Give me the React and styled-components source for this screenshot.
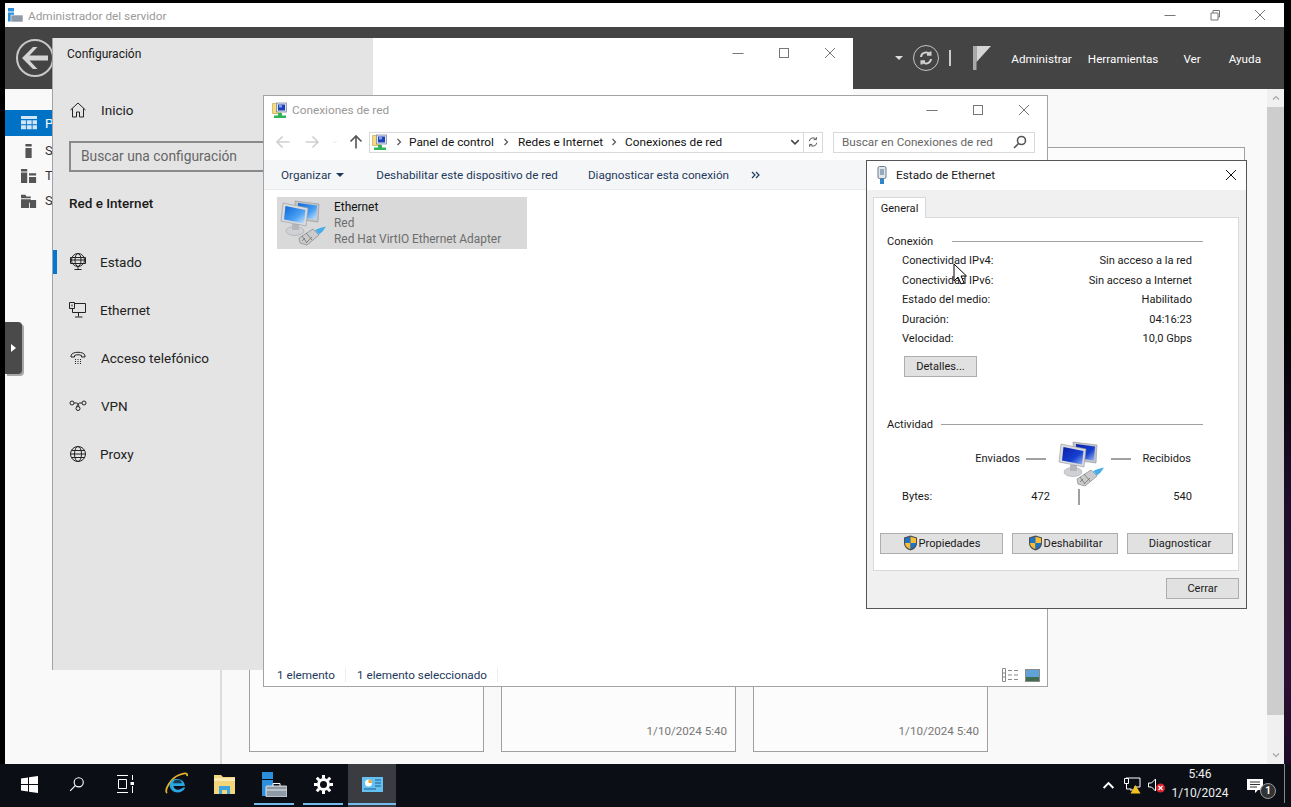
import React from "react";
import styled, { createGlobalStyle } from "styled-components";

const GlobalStyle = createGlobalStyle`
  html, body { margin: 0; padding: 0; background: #000; }
  body { font-family: Roboto, "Noto Sans", sans-serif; font-size: 12px; color: #1a1a1a; }
  * { box-sizing: border-box; }
`;

/* ---------- icons ---------- */

const Caption = ({ kind, color = "#777" }) => (
  <svg width="12" height="12" viewBox="0 0 12 12" fill="none" stroke={color} strokeWidth="1">
    {kind === "min" && <path d="M0.5 6.5h11" />}
    {kind === "max" && <rect x="1.5" y="1.5" width="9" height="9" />}
    {kind === "restore" && <path d="M2 4h7v7H2zM4 4V1.5h6.5V8H9" />}
    {kind === "close" && <path d="M1 1l10 10M11 1L1 11" />}
  </svg>
);

const NetworkFolder = () => (
  <svg width="17" height="17" viewBox="0 0 17 17">
    <path d="M0.5 1.5h4l1 1h3v9h-8z" fill="#f4dc82" stroke="#c9a94a" strokeWidth="0.7" />
    <rect x="4.5" y="1" width="10" height="9" fill="#dfe4ee" stroke="#7c8aa8" strokeWidth="0.8" />
    <rect x="6" y="2.5" width="7" height="6" fill="#1f3fb5" />
    <rect x="7" y="3" width="3" height="2.5" fill="#7da0f0" />
    <path d="M6 11h4v2.500h4V16H2v-2.500h4z" fill="#2fb457" />
  </svg>
);

const Computers = ({ washed }) => (
  <svg width="48" height="48" viewBox="0 0 48 48">
    <defs>
      <linearGradient id={washed ? "scrA" : "scrB"} x1="0" y1="0" x2="1" y2="1">
        <stop offset="0" stopColor={washed ? "#0d66d8" : "#0a1fa8"} />
        <stop offset="0.6" stopColor={washed ? "#4aa0f2" : "#1540d0"} />
        <stop offset="1" stopColor={washed ? "#cfe6fb" : "#9db8f0"} />
      </linearGradient>
    </defs>
    <path d="M15 2l24 3-1 18-22-3z" fill="#c3c5c9" stroke="#8f9298" strokeWidth="0.6" />
    <path d="M18 4l19 2.500-1 14-18-2.500z" fill={`url(#${washed ? "scrA" : "scrB"})`} />
    <ellipse cx="15" cy="32" rx="9" ry="4.500" fill="#cfd1d4" stroke="#a4a6aa" strokeWidth="0.6" />
    <rect x="12" y="25" width="7" height="6" fill="#b4b6ba" />
    <path d="M3 4l25 5-2 18L1 22z" fill="#d8dadd" stroke="#94979d" strokeWidth="0.6" />
    <path d="M5.500 7l20 4-1.500 13.500-20-4z" fill={`url(#${washed ? "scrA" : "scrB"})`} />
    <path d="M19 39l14-9 6 6-12 10-7-2z" fill="#c9cbce" stroke="#83868b" strokeWidth="0.7" />
    <path d="M22 42l3-3M26 44l3-3M29 41l3-3M22 37l5 7M26 34l6 7" stroke="#77755c" strokeWidth="0.8" />
    <path d="M35 31l5-2 6-1.500-3.500 5-3.500 3z" fill="#45aee8" />
  </svg>
);

const Shield = () => (
  <svg width="15" height="16" viewBox="0 0 15 16">
    <path d="M7.500 0.500l6.500 2v5.500c0 4-3 6.500-6.500 7.500C4 14.500 1 12 1 8V2.500z" fill="#4d4d4d" />
    <path d="M7.500 1.700V8H2V3.300z" fill="#1e73c4" />
    <path d="M7.500 1.700V8H13V3.300z" fill="#f5bd3a" />
    <path d="M2 8h5.500v6.200C4.500 13.400 2.200 11.300 2 8z" fill="#f5bd3a" />
    <path d="M13 8H7.500v6.200c3-.8 5.300-2.900 5.500-6.200z" fill="#1e73c4" />
  </svg>
);

const NavGlyph = ({ kind }) => (
  <svg width="18" height="18" viewBox="0 0 18 18" fill="none" stroke="#222" strokeWidth="1">
    {kind === "home" && <path d="M1.500 9L9 2l7.500 7M3.500 7.500V16h4v-5h3v5h4V7.500" />}
    {kind === "status" && (
      <>
        <circle cx="9" cy="7" r="6.500" />
        <ellipse cx="9" cy="7" rx="3" ry="6.500" />
        <path d="M2.500 7h13M1.500 4.500h15v6h-15zM9 13.500V16M5.500 16.500h7" />
      </>
    )}
    {kind === "ethernet" && (
      <path d="M6 2.500h10.500v9h-13V8M9.500 11.500v4M6 16h7.500M0.500 1.500h5v6h-5zM3 3.500v2" />
    )}
    {kind === "dial" && (
      <>
        <path d="M2 7c0-5 14-5 14 0v1h-3.500V6.500c-2-1-5-1-7 0V8H2z" />
        <path d="M6 10.500h1M8.500 10.500h1M11 10.500h1M6 12.500h1M8.500 12.500h1M11 12.500h1M6 14.500h1M8.500 14.500h1M11 14.500h1" />
      </>
    )}
    {kind === "vpn" && (
      <>
        <circle cx="3" cy="6" r="2" />
        <circle cx="15" cy="6" r="2" />
        <circle cx="9" cy="11.500" r="2" />
        <path d="M5 6h2.500c1.500 0 2 1.500 2.500 3.500M13 6h-2.500c-1 0-1.500 1.500-3 3.700" />
      </>
    )}
    {kind === "globe" && (
      <>
        <circle cx="9" cy="9" r="7.500" />
        <ellipse cx="9" cy="9" rx="3.500" ry="7.500" />
        <path d="M1.500 9h15M2.500 5.500h13M2.500 12.500h13" />
      </>
    )}
  </svg>
);

const SideGlyph = ({ kind, color }) => (
  <svg width="16" height="16" viewBox="0 0 18 16" fill={color}>
    {kind === "dash" && (
      <path d="M0 0h18v3.500H0zM0 5h5.500v4.500H0zM6.500 5H12v4.500H6.500zM13 5h5v4.500h-5zM0 10.500h5.500V15H0zM6.500 10.500H12V15H6.500zM13 10.500h5V15h-5z" />
    )}
    {kind === "local" && <path d="M5 0h7v3H5zM5 4.500h7V16H5z" />}
    {kind === "all" && <path d="M0 0h7v3H0zM0 4h7v12H0zM9 5h8v2.500H9zM9 9h8v7H9z" />}
    {kind === "files" && <path d="M0 1h5l1 2h5v2H0zM0 6h11v4H9v6H0zM10 7h7v9h-7z" />}
  </svg>
);

const Arrow = ({ dir, color }) => (
  <svg
    width="16"
    height="14"
    viewBox="0 0 16 14"
    fill="none"
    stroke={color}
    strokeWidth="1.600"
    style={{ transform: dir === "right" ? "scaleX(-1)" : dir === "up" ? "rotate(90deg)" : "none" }}
  >
    <path d="M14.500 7H2M7.500 1.500L2 7l5.500 5.500" />
  </svg>
);

const BackArrow = () => (
  <svg width="28" height="24" viewBox="0 0 28 24" fill="#d4d4d4">
    <path d="M12 1h4.500L8.500 9.500H27v5H8.500L16.500 23H12L1 12z" />
  </svg>
);

const Chevron = ({ size = 8, color = "#666", rotate = 0 }) => (
  <svg width={size} height={size} viewBox="0 0 8 8" fill="none" stroke={color} strokeWidth="1.200" style={{ transform: `rotate(${rotate}deg)` }}>
    <path d="M2.500 1l3 3-3 3" />
  </svg>
);

const DoubleChevron = () => (
  <svg width="9" height="8" viewBox="0 0 9 8" fill="none" stroke="#1e395b" strokeWidth="1.200">
    <path d="M1 1l3 3-3 3M5 1l3 3-3 3" />
  </svg>
);

const SearchGlass = ({ color = "#555", size = 14, width = 1.600 }) => (
  <svg width={size} height={size} viewBox="0 0 14 14" fill="none" stroke={color} strokeWidth={width}>
    <circle cx="8.500" cy="5.500" r="4" />
    <path d="M5.500 8.500L1 13" />
  </svg>
);

const Refresh = ({ size, color, width }) => (
  <svg width={size} height={size} viewBox="0 0 16 16" fill="none" stroke={color} strokeWidth={width}>
    <path d="M3 7a5 5 0 0 1 9-2.500M13 9a5 5 0 0 1-9 2.500M12.500 1.500v3.300H9M3.500 14.500v-3.300H7" />
  </svg>
);

const Pointer = () => (
  <svg width="14" height="22" viewBox="0 0 14 22">
    <path d="M1 1v17l4-4 3 7 3-1.300-3-6.700h5.500z" fill="#fff" stroke="#000" strokeWidth="1" />
  </svg>
);

/* ---------- desktop + server manager ---------- */

const Desktop = styled.div`
  position: relative;
  width: 1291px;
  height: 807px;
  overflow: hidden;
  display: flex;
  flex-direction: column;
  background: linear-gradient(180deg, #000 0%, #000 40%, #1d0f2b 62%, #2a1033 85%, #120a1f 100%);
`;

const ManagerSlot = styled.div`
  flex: 1;
  min-height: 0;
  padding: 3px 7px 0 5px;
  background: linear-gradient(90deg, #000 0 5px, transparent 5px);
`;

const Manager = styled.div`
  height: 100%;
  display: flex;
  flex-direction: column;
  background: #f9f9f9;
`;

const TitleBar = styled.div`
  height: ${(p) => p.$h}px;
  flex: none;
  display: flex;
  align-items: center;
  background: #fff;
  padding-left: ${(p) => p.$pad}px;
  padding-bottom: ${(p) => p.$bottom || 0}px;
  gap: ${(p) => p.$gap || 6}px;
`;

const TitleText = styled.span`
  font-size: 11.800px;
  color: ${(p) => p.$color || "#999"};
  flex: 1;
  padding-top: ${(p) => p.$top || 0}px;
`;

const CaptionRow = styled.div`
  display: flex;
  align-items: center;
  margin-right: ${(p) => p.$right}px;
  gap: ${(p) => p.$gap}px;
`;

const ManagerHeader = styled.div`
  height: 62px;
  flex: none;
  display: flex;
  align-items: center;
  background: #444;
  padding-left: 11px;
  color: #fff;
`;

const BackCircle = styled.div`
  width: 38px;
  height: 38px;
  border-radius: 50%;
  border: 2px solid #c8c8c8;
  display: flex;
  align-items: center;
  justify-content: center;
`;

const HeaderRight = styled.div`
  margin-left: auto;
  display: flex;
  align-items: center;
`;

const DropCaret = styled.i`
  width: 0;
  height: 0;
  border-left: 4px solid transparent;
  border-right: 4px solid transparent;
  border-top: 4px solid ${(p) => p.$color || "#ddd"};
  display: block;
`;

const RefreshCircle = styled.div`
  width: 26px;
  height: 26px;
  margin-left: 10px;
  border: 1.500px solid #c4c4c4;
  border-radius: 50%;
  display: flex;
  align-items: center;
  justify-content: center;
`;

const HeaderSep = styled.div`
  width: 2px;
  height: 16px;
  background: #ccc;
  margin: 0 22px 0 10px;
`;

const HeaderMenu = styled.div`
  display: flex;
  margin-left: 20px;
  margin-right: 23px;
  padding-top: 2px;
  font-size: 11.700px;
  color: #fff;
`;

const HeaderMenuItem = styled.span`
  margin-left: ${(p) => p.$left || 0}px;
`;

const ManagerBody = styled.div`
  flex: 1;
  min-height: 0;
  display: flex;
`;

const Sidebar = styled.div`
  width: 217px;
  flex: none;
  padding-top: 21px;
  border-right: 2px solid #dcdcdc;
  overflow: hidden;
`;

const SideItem = styled.div`
  height: 25px;
  display: flex;
  align-items: center;
  padding-left: 16px;
  gap: 8px;
  white-space: nowrap;
  font-size: 13px;
  color: #333;
`;

const ActiveSideItem = styled(SideItem)`
  height: 26px;
  margin-bottom: 2px;
  background: #0072c6;
  color: #fff;
`;

const MainArea = styled.div`
  flex: 1;
  min-width: 0;
  padding: 58px 22px 0 27px;
  position: relative;
`;

const WelcomePanel = styled.div`
  height: 330px;
  border: 1px solid #a0a0a0;
  background: #fcfcfc;
  margin-bottom: 23px;
`;

const CardRow = styled.div`
  display: grid;
  grid-template-columns: repeat(3, 235px);
  gap: 17px;
`;

const Card = styled.div`
  height: 252px;
  border: 1px solid #a0a0a0;
  background: #fcfcfc;
  display: flex;
  align-items: flex-end;
  justify-content: flex-end;
  padding: 0 8px 13px 0;
  font-size: 11.600px;
  color: #777;
`;

const Scrollbar = styled.div`
  width: 17px;
  flex: none;
  background: #f0f0f0;
  display: flex;
  flex-direction: column;
  align-items: center;
`;

const ScrollEnd = styled.div`
  height: 18px;
  flex: none;
  display: flex;
  align-items: center;
  justify-content: center;
`;

const ScrollThumb = styled.div`
  flex: 1;
  width: 100%;
  background: #cdcdcd;
  margin-bottom: 31px;
`;

const DockTab = styled.div`
  position: absolute;
  left: 5px;
  top: 322px;
  width: 17px;
  height: 52px;
  background: #4a4a4a;
  border-radius: 0 4px 4px 0;
  box-shadow: 2px 2px 0 0 #a8a8a8;
  display: flex;
  align-items: center;
  justify-content: center;
`;

const TinyPlay = styled.i`
  display: block;
  width: 0;
  height: 0;
  border-top: 4px solid transparent;
  border-bottom: 4px solid transparent;
  border-left: 5px solid #fff;
`;

/* ---------- floating windows ---------- */

const FloatingWindow = styled.div`
  position: absolute;
  left: ${(p) => p.$x}px;
  top: ${(p) => p.$y}px;
  width: ${(p) => p.$w}px;
  height: ${(p) => p.$h}px;
  border: 1px solid ${(p) => p.$border || "#a3a3a3"};
  background: #fff;
  display: flex;
  flex-direction: column;
`;

/* settings */

const SettingsPane = styled.div`
  width: 320px;
  height: 100%;
  background: #e4e4e4;
  display: flex;
  flex-direction: column;
`;

const SettingsShell = styled(FloatingWindow)`
  flex-direction: row;
  border-top: none;
  border-right: none;
  border-bottom: none;
`;

const SettingsTitle = styled.div`
  padding: 9px 0 0 14px;
  height: 58px;
  font-size: 12px;
  color: #1a1a1a;
`;

const SettingsRow = styled.div`
  height: 48px;
  display: flex;
  align-items: center;
  padding-left: 16px;
  font-size: 13.500px;
  color: #222;
  position: relative;
  gap: ${(p) => p.$gap || 13}px;
`;

const HomeRow = styled(SettingsRow)`
  height: 28px;
  margin-bottom: 17px;
`;

const ActiveMark = styled.div`
  position: absolute;
  left: 0;
  top: 12px;
  width: 4px;
  height: 24px;
  background: #0078d7;
`;

const SettingsSearch = styled.div`
  margin-left: 16px;
  width: 300px;
  height: 31px;
  border: 2px solid #8a8a8a;
  display: flex;
  align-items: center;
  padding: 0 0 1px 10px;
  font-size: 13.800px;
  color: #666;
`;

const GroupTitle = styled.div`
  margin: 23px 0 27px 16px;
  font-size: 13.500px;
  font-weight: 500;
  color: #1a1a1a;
`;

const SettingsRight = styled.div`
  flex: 1;
  display: flex;
  justify-content: flex-end;
`;

const SettingsCaption = styled(CaptionRow)`
  align-self: flex-start;
  margin-top: 9px;
`;

/* connections */

const AddressRow = styled.div`
  height: 36px;
  flex: none;
  display: flex;
  align-items: center;
  padding-left: 11px;
`;

const NavButton = styled.div`
  width: ${(p) => p.$w}px;
  flex: none;
  display: flex;
  justify-content: ${(p) => (p.$inset ? "flex-start" : "center")};
  padding-left: ${(p) => p.$inset || 0}px;
`;

const AddressBox = styled.div`
  width: 454px;
  height: 21px;
  border: 1px solid #d9d9d9;
  display: flex;
  align-items: center;
  padding-left: 2px;
  font-size: 11.800px;
  color: #111;
`;

const Crumb = styled.span`
  margin: 0 ${(p) => p.$space}px;
  line-height: 0;
`;

const AddressTail = styled.div`
  margin-left: auto;
  display: flex;
  align-items: center;
  height: 100%;
`;

const RefreshBox = styled.div`
  width: 19px;
  height: 100%;
  margin-left: 3px;
  border-left: 1px solid #d9d9d9;
  display: flex;
  align-items: center;
  justify-content: center;
`;

const SearchBox = styled.div`
  width: 202px;
  height: 21px;
  margin-left: 10px;
  border: 1px solid #d9d9d9;
  display: flex;
  align-items: center;
  justify-content: space-between;
  padding: 0 7px 0 8px;
  font-size: 11.700px;
  color: #666;
`;

const CommandBar = styled.div`
  height: 30px;
  flex: none;
  display: flex;
  align-items: center;
  padding-left: 17px;
  background: #f5f6f7;
  border-bottom: 1px solid #e8e9eb;
  font-size: 11.700px;
  color: #1e395b;
`;

const Command = styled.span`
  margin-right: ${(p) => p.$right}px;
  display: flex;
  align-items: center;
  gap: 5px;
`;

const ConnectionList = styled.div`
  flex: 1;
  padding: 7px 13px;
`;

const ConnectionItem = styled.div`
  width: 250px;
  height: 52px;
  background: #d9d9d9;
  display: flex;
  align-items: center;
  gap: 6px;
  padding-left: 3px;
  line-height: 16px;
  font-size: 11.900px;
`;

const ConnectionText = styled.div`
  color: #6d6d6d;
  white-space: nowrap;
`;

const ConnectionName = styled.div`
  color: #111;
`;

const StatusBar = styled.div`
  height: 22px;
  flex: none;
  display: flex;
  align-items: center;
  padding-left: 13px;
  font-size: 11.700px;
  color: #1e395b;
`;

const StatusCell = styled.span`
  padding-right: 10px;
  margin-right: 11px;
  border-right: 1px solid #eee;
`;

const ViewIcons = styled.div`
  margin-left: auto;
  margin-right: 7px;
  display: flex;
  align-items: center;
  gap: 6px;
`;

/* ethernet status */

const DialogBody = styled.div`
  flex: 1;
  background: #f0f0f0;
  padding: 7px 7px 0 6px;
  display: flex;
  flex-direction: column;
`;

const Tab = styled.div`
  width: 53px;
  height: 21px;
  background: #fff;
  border: 1px solid #d9d9d9;
  border-bottom: none;
  display: flex;
  align-items: center;
  justify-content: center;
  font-size: 11.100px;
  position: relative;
  z-index: 1;
  margin-bottom: -1px;
`;

const TabPanel = styled.div`
  height: 354px;
  background: #fff;
  border: 1px solid #d9d9d9;
  padding: 13px 6px 0 6px;
  font-size: 11.100px;
  color: #1a1a1a;
`;

const SectionHead = styled.div`
  height: 20px;
  display: flex;
  align-items: center;
  padding-left: 7px;
  margin-top: ${(p) => p.$top || 0}px;
  margin-right: 29px;
  gap: ${(p) => p.$gap}px;
`;

const SectionRule = styled.div`
  flex: 1;
  height: 1px;
  background: #a0a0a0;
`;

const InfoRow = styled.div`
  height: 19.500px;
  display: flex;
  align-items: center;
  justify-content: space-between;
  padding-left: 22px;
  margin-right: 40px;
`;

const DlgButton = styled.div`
  height: 21px;
  width: ${(p) => p.$w}px;
  background: #e1e1e1;
  border: 1px solid #adadad;
  display: flex;
  align-items: center;
  justify-content: center;
  gap: 1px;
  font-size: 11.100px;
  color: #1a1a1a;
`;

const DetailsButton = styled(DlgButton)`
  margin: 7px 0 0 24px;
`;

const ActivityGrid = styled.div`
  display: grid;
  grid-template-columns: 148px 58px 84px;
  margin: 5px 0 0 22px;
`;

const ActivityCell = styled.div`
  display: flex;
  align-items: center;
  justify-content: ${(p) => p.$justify || "flex-end"};
  gap: 6px;
  height: ${(p) => p.$h}px;
  padding-right: ${(p) => p.$right || 0}px;
  padding-left: ${(p) => p.$left || 0}px;
`;

const Dash = styled.div`
  width: 20px;
  height: 2px;
  background: #a0a0a0;
`;

const ActivityBar = styled.div`
  width: 2px;
  height: 16px;
  background: #a0a0a0;
`;

const ButtonRow = styled.div`
  display: grid;
  grid-template-columns: 123px 106px 106px;
  column-gap: 9px;
  margin-top: 27px;
`;

const DialogFoot = styled.div`
  display: flex;
  justify-content: flex-end;
  margin-top: 7px;
`;

const MousePointer = styled.div`
  position: absolute;
  left: 953px;
  top: 263px;
  line-height: 0;
`;

/* ---------- taskbar ---------- */

const Taskbar = styled.div`
  height: 43px;
  flex: none;
  display: flex;
  align-items: stretch;
  background: #0b0e15;
  color: #fff;
  position: relative;
`;

const TaskSlot = styled.div`
  width: ${(p) => p.$w || 48}px;
  margin-left: ${(p) => p.$left || 0}px;
  flex: none;
  display: flex;
  align-items: center;
  justify-content: center;
  padding-bottom: 3px;
  position: relative;
  background: ${(p) => (p.$active ? "#3a3c41" : "transparent")};
`;

const RunningLine = styled.div`
  position: absolute;
  bottom: 2px;
  left: ${(p) => (p.$active ? 0 : 4)}px;
  right: ${(p) => (p.$active ? 0 : 4)}px;
  height: 2px;
  background: #76b9ed;
`;

const Tray = styled.div`
  margin-left: auto;
  display: flex;
  align-items: center;
  padding-right: 11px;
`;

const TrayIcon = styled.div`
  width: 24px;
  display: flex;
  justify-content: center;
  line-height: 0;
`;

const Clock = styled.div`
  width: 64px;
  margin: 0 15px 3px 0;
  text-align: center;
  font-size: 12px;
  line-height: 19px;
  color: #eee;
`;

const Notify = styled.div`
  position: relative;
  width: 26px;
  line-height: 0;
`;

const NotifyBadge = styled.div`
  position: absolute;
  right: -3px;
  bottom: -6px;
  width: 16px;
  height: 16px;
  border-radius: 50%;
  border: 1px solid #999;
  background: #333;
  color: #fff;
  font-size: 10px;
  font-weight: 700;
  line-height: 14px;
  text-align: center;
`;

const ShowDesktop = styled.div`
  width: 1px;
  margin: 0 6px 4px 0;
  background: #888;
`;

const WindowsLogo = () => (
  <svg width="17" height="17" viewBox="0 0 17 17" fill="#fff">
    <path d="M0 2.500l7-1V8H0zM8 1.300L17 0v8H8zM0 9h7v6.500l-7-1zM8 9h9v8l-9-1.300z" />
  </svg>
);

const TaskView = () => (
  <svg width="17" height="18" viewBox="0 0 17 18" fill="none" stroke="#fff" strokeWidth="1">
    <path d="M0 .5h11M0 17.500h11M1.500 4.500h8v9h-8zM15.500 0v5M15.500 11v7" />
    <rect x="13.500" y="7" width="3.500" height="3" fill="#fff" stroke="none" />
  </svg>
);

const IeLogo = () => (
  <svg width="24" height="24" viewBox="0 0 24 24" fill="none">
    <path d="M2 21C-1 18 6 6 14 3c4-1.500 9-3 8 1" stroke="#e5b32a" strokeWidth="1.800" />
    <path d="M4.500 12.500a8 8 0 0 1 15.500 1.500H8.500c.5 4 6 5 9.500 1.500h2.300C17 23 5 22 4.500 12.500z" fill="#2aa6e0" />
    <path d="M8 11.200c1-4.500 8-4.500 9 0H8z" fill="#0b0e15" opacity="0.7" />
  </svg>
);

const ExplorerIcon = () => (
  <svg width="22" height="19" viewBox="0 0 22 19">
    <path d="M0 0h7l2 2h12v17H0z" fill="#f3d57c" />
    <rect x="0" y="3" width="21" height="3" fill="#fbeab0" />
    <path d="M5 11h11v8h-3v-4H8v4H5z" fill="#3da6df" />
  </svg>
);

const ManagerIcon = () => (
  <svg width="25" height="25" viewBox="0 0 25 25">
    <rect x="0" y="0" width="11" height="7" fill="#2b8fdc" />
    <rect x="0" y="8" width="11" height="16" fill="#2b8fdc" />
    <rect x="4" y="14" width="21" height="11" rx="1" fill="#8d9aa5" stroke="#fff" strokeWidth="0.8" />
    <path d="M11 14v-2.500h7V14" fill="none" stroke="#fff" strokeWidth="1" />
    <path d="M4.500 18h20" stroke="#fff" strokeWidth="0.8" />
  </svg>
);

const GearIcon = () => (
  <svg width="19" height="19" viewBox="0 0 19 19" fill="none" stroke="#fff">
    <circle cx="9.500" cy="9.500" r="5" strokeWidth="3" />
    <path d="M9.500 0v3.500M9.500 15.500V19M0 9.500h3.500M15.500 9.500H19M2.800 2.800l2.400 2.400M13.800 13.800l2.400 2.400M2.800 16.200l2.400-2.400M13.800 5.200l2.400-2.400" strokeWidth="3" />
  </svg>
);

const PanelIcon = () => (
  <svg width="21" height="15" viewBox="0 0 21 15">
    <rect width="21" height="15" fill="#63c0f0" />
    <circle cx="6.500" cy="6" r="3.500" fill="#fff" />
    <path d="M6.500 6V2.500A3.500 3.500 0 0 1 10 6z" fill="#f1a52b" />
    <path d="M13 3h6M13 6h6M13 9h6M2 12h12" stroke="#1c5c92" strokeWidth="1.200" />
  </svg>
);

const TrayNetwork = () => (
  <svg width="17" height="17" viewBox="0 0 17 17" fill="none" stroke="#fff">
    <path d="M2 1h14v9h-6M9 13h-3M0.500 1.500h4v5h-4zM2.500 6.500V12h5" />
    <path d="M11.500 8l5 8.500h-10z" fill="#f3c11f" stroke="none" />
  </svg>
);

const TrayMute = () => (
  <svg width="17" height="15" viewBox="0 0 17 15">
    <path d="M.5 5h3l4-4v12l-4-4h-3z" fill="none" stroke="#fff" />
    <circle cx="12.500" cy="10" r="4.500" fill="#d8232f" />
    <path d="M10.500 8l4 4M14.500 8l-4 4" stroke="#fff" strokeWidth="1.200" />
  </svg>
);

const settingsLinks = [
  { glyph: "status", label: "Estado", active: true, gap: 13 },
  { glyph: "ethernet", label: "Ethernet", gap: 13 },
  { glyph: "dial", label: "Acceso telefónico", gap: 14 },
  { glyph: "vpn", label: "VPN", gap: 14 },
  { glyph: "globe", label: "Proxy", gap: 13 },
];

const connectionRows = [
  ["Conectividad IPv4:", "Sin acceso a la red"],
  ["Conectividad IPv6:", "Sin acceso a Internet"],
  ["Estado del medio:", "Habilitado"],
  ["Duración:", "04:16:23"],
  ["Velocidad:", "10,0 Gbps"],
];

export default function App() {
  return (
    <>
      <GlobalStyle />
      <Desktop>
        <ManagerSlot>
          <Manager>
            <TitleBar $h={24} $pad={3} $gap={5}>
              <svg width="15" height="14" viewBox="0 0 15 14">
                <rect x="0" y="0" width="6" height="3.500" fill="#2b8fdc" />
                <rect x="0" y="4.500" width="6" height="9" fill="#2b8fdc" />
                <rect x="3" y="7" width="12" height="7" fill="#8d9aa5" stroke="#fff" strokeWidth="0.600" />
              </svg>
              <TitleText $top={2}>Administrador del servidor</TitleText>
              <CaptionRow $right={18} $gap={33}>
                <Caption kind="min" />
                <Caption kind="restore" />
                <Caption kind="close" />
              </CaptionRow>
            </TitleBar>
            <ManagerHeader>
              <BackCircle>
                <BackArrow />
              </BackCircle>
              <HeaderRight>
                <DropCaret />
                <RefreshCircle>
                  <Refresh size={16} color="#d0d0d0" width={2} />
                </RefreshCircle>
                <HeaderSep />
                <svg width="18" height="24" viewBox="0 0 18 24">
                  <rect x="0" y="0" width="3.500" height="24" fill="#a9a9a9" />
                  <path d="M3.500 0H18L3.500 16z" fill="#d6d6d6" />
                </svg>
                <HeaderMenu>
                  <HeaderMenuItem>Administrar</HeaderMenuItem>
                  <HeaderMenuItem $left={16}>Herramientas</HeaderMenuItem>
                  <HeaderMenuItem $left={25}>Ver</HeaderMenuItem>
                  <HeaderMenuItem $left={28}>Ayuda</HeaderMenuItem>
                </HeaderMenu>
              </HeaderRight>
            </ManagerHeader>
            <ManagerBody>
              <Sidebar>
                <ActiveSideItem>
                  <SideGlyph kind="dash" color="#cfe6f8" />P
                </ActiveSideItem>
                <SideItem>
                  <SideGlyph kind="local" color="#555" />S
                </SideItem>
                <SideItem>
                  <SideGlyph kind="all" color="#555" />T
                </SideItem>
                <SideItem>
                  <SideGlyph kind="files" color="#555" />S
                </SideItem>
              </Sidebar>
              <MainArea>
                <WelcomePanel />
                <CardRow>
                  <Card />
                  <Card>1/10/2024 5:40</Card>
                  <Card>1/10/2024 5:40</Card>
                </CardRow>
              </MainArea>
              <Scrollbar>
                <ScrollEnd>
                  <Chevron color="#a6a6a6" rotate={-90} />
                </ScrollEnd>
                <ScrollThumb />
                <ScrollEnd>
                  <Chevron color="#a6a6a6" rotate={90} />
                </ScrollEnd>
              </Scrollbar>
            </ManagerBody>
          </Manager>
        </ManagerSlot>

        <DockTab>
          <TinyPlay />
        </DockTab>

        <SettingsShell $x={52} $y={38} $w={801} $h={632} $border="#a3a3a3">
          <SettingsPane>
            <SettingsTitle>Configuración</SettingsTitle>
            <HomeRow $gap={14}>
              <NavGlyph kind="home" />
              Inicio
            </HomeRow>
            <SettingsSearch>Buscar una configuración</SettingsSearch>
            <GroupTitle>Red e Internet</GroupTitle>
            {settingsLinks.map((link) => (
              <SettingsRow key={link.label} $gap={link.gap}>
                {link.active && <ActiveMark />}
                <NavGlyph kind={link.glyph} />
                {link.label}
              </SettingsRow>
            ))}
          </SettingsPane>
          <SettingsRight>
            <SettingsCaption $right={17} $gap={34}>
              <Caption kind="min" />
              <Caption kind="max" />
              <Caption kind="close" />
            </SettingsCaption>
          </SettingsRight>
        </SettingsShell>

        <FloatingWindow $x={263} $y={95} $w={785} $h={592}>
          <TitleBar $h={28} $pad={8} $gap={3}>
            <NetworkFolder />
            <TitleText>Conexiones de red</TitleText>
            <CaptionRow $right={17} $gap={34}>
              <Caption kind="min" />
              <Caption kind="max" />
              <Caption kind="close" />
            </CaptionRow>
          </TitleBar>
          <AddressRow>
            <NavButton $w={16}>
              <Arrow color="#cfcfcf" />
            </NavButton>
            <NavButton $w={42}>
              <Arrow dir="right" color="#cfcfcf" />
            </NavButton>
            <NavButton $w={4}>
              <Chevron color="#cfcfcf" rotate={90} />
            </NavButton>
            <NavButton $w={32} $inset={11}>
              <Arrow dir="up" color="#555" />
            </NavButton>
            <AddressBox>
              <NetworkFolder />
              <Crumb $space={6}>
                <Chevron color="#555" />
              </Crumb>
              Panel de control
              <Crumb $space={8}>
                <Chevron color="#555" />
              </Crumb>
              Redes e Internet
              <Crumb $space={7}>
                <Chevron color="#555" />
              </Crumb>
              Conexiones de red
              <AddressTail>
                <Chevron size={10} color="#444" rotate={90} />
                <RefreshBox>
                  <Refresh size={12} color="#555" width={1.300} />
                </RefreshBox>
              </AddressTail>
            </AddressBox>
            <SearchBox>
              Buscar en Conexiones de red
              <SearchGlass />
            </SearchBox>
          </AddressRow>
          <CommandBar>
            <Command $right={32}>
              Organizar
              <DropCaret $color="#1e395b" />
            </Command>
            <Command $right={30}>Deshabilitar este dispositivo de red</Command>
            <Command $right={22}>Diagnosticar esta conexión</Command>
            <DoubleChevron />
          </CommandBar>
          <ConnectionList>
            <ConnectionItem>
              <Computers washed />
              <ConnectionText>
                <ConnectionName>Ethernet</ConnectionName>
                Red
                <br />
                Red Hat VirtIO Ethernet Adapter
              </ConnectionText>
            </ConnectionItem>
          </ConnectionList>
          <StatusBar>
            <StatusCell>1 elemento</StatusCell>
            <StatusCell>1 elemento seleccionado</StatusCell>
            <ViewIcons>
              <svg width="17" height="14" viewBox="0 0 17 14" fill="none" stroke="#8a8a8a">
                <path d="M.5.5h3v13h-3zM.5 5h3M.5 9h3M6 2.500h4M12 2.500h4M6 7h4M12 7h4M6 11.500h4M12 11.500h4" />
              </svg>
              <svg width="15" height="13" viewBox="0 0 15 13">
                <rect x="0.500" y="0.500" width="14" height="12" fill="#5fa3d8" stroke="#8a8a8a" />
                <rect x="1" y="8" width="13" height="4" fill="#3f6d4f" />
              </svg>
            </ViewIcons>
          </StatusBar>
        </FloatingWindow>

        <FloatingWindow $x={866} $y={160} $w={381} $h={449} $border="#555">
          <TitleBar $h={29} $pad={10} $gap={9} $bottom={2}>
            <svg width="10" height="18" viewBox="0 0 10 18">
              <rect x="1" y="0.500" width="8" height="12" rx="1.500" fill="#dfe6ee" stroke="#6d7b8c" />
              <rect x="3" y="3" width="4" height="6" fill="#97a9bc" />
              <rect x="3" y="13" width="4" height="5" fill="#2e86c9" />
            </svg>
            <TitleText $color="#1a1a1a">Estado de Ethernet</TitleText>
            <CaptionRow $right={9} $gap={0}>
              <Caption kind="close" color="#111" />
            </CaptionRow>
          </TitleBar>
          <DialogBody>
            <Tab>General</Tab>
            <TabPanel>
              <SectionHead $gap={19}>
                Conexión
                <SectionRule />
              </SectionHead>
              {connectionRows.map(([label, value]) => (
                <InfoRow key={label}>
                  <span>{label}</span>
                  <span>{value}</span>
                </InfoRow>
              ))}
              <DetailsButton $w={73}>Detalles...</DetailsButton>
              <SectionHead $top={38} $gap={8}>
                Actividad
                <SectionRule />
              </SectionHead>
              <ActivityGrid>
                <ActivityCell $h={38} $right={4}>
                  Enviados
                  <Dash />
                </ActivityCell>
                <ActivityCell $h={48} $justify="center" $left={6}>
                  <Computers />
                </ActivityCell>
                <ActivityCell $h={38} $justify="space-between" $left={3} $right={1}>
                  <Dash />
                  Recibidos
                </ActivityCell>
                <ActivityCell $h={18} $justify="space-between">
                  <span>Bytes:</span>
                  <span>472</span>
                </ActivityCell>
                <ActivityCell $h={18} $justify="center">
                  <ActivityBar />
                </ActivityCell>
                <ActivityCell $h={18}>540</ActivityCell>
              </ActivityGrid>
              <ButtonRow>
                <DlgButton $w={123}>
                  <Shield />
                  Propiedades
                </DlgButton>
                <DlgButton $w={106}>
                  <Shield />
                  Deshabilitar
                </DlgButton>
                <DlgButton $w={106}>Diagnosticar</DlgButton>
              </ButtonRow>
            </TabPanel>
            <DialogFoot>
              <DlgButton $w={73}>Cerrar</DlgButton>
            </DialogFoot>
          </DialogBody>
        </FloatingWindow>

        <MousePointer>
          <Pointer />
        </MousePointer>

        <Taskbar>
          <TaskSlot $left={5}>
            <WindowsLogo />
          </TaskSlot>
          <TaskSlot>
            <SearchGlass color="#fff" size={16} width={1} />
          </TaskSlot>
          <TaskSlot>
            <TaskView />
          </TaskSlot>
          <TaskSlot $left={4}>
            <IeLogo />
          </TaskSlot>
          <TaskSlot>
            <ExplorerIcon />
          </TaskSlot>
          <TaskSlot $left={1}>
            <ManagerIcon />
            <RunningLine />
          </TaskSlot>
          <TaskSlot $left={1}>
            <GearIcon />
            <RunningLine />
          </TaskSlot>
          <TaskSlot $active $left={1}>
            <PanelIcon />
            <RunningLine $active />
          </TaskSlot>
          <Tray>
            <TrayIcon>
              <Chevron size={13} color="#fff" rotate={-90} />
            </TrayIcon>
            <TrayIcon>
              <TrayNetwork />
            </TrayIcon>
            <TrayIcon>
              <TrayMute />
            </TrayIcon>
            <Clock>
              5:46
              <br />
              1/10/2024
            </Clock>
            <Notify>
              <svg width="16" height="14" viewBox="0 0 16 14">
                <path d="M0 0h16v11h-5l-3 3v-3H0z" fill="#fff" />
                <path d="M3 3h10M3 5.500h10M3 8h7" stroke="#333" />
              </svg>
              <NotifyBadge>1</NotifyBadge>
            </Notify>
          </Tray>
          <ShowDesktop />
        </Taskbar>
      </Desktop>
    </>
  );
}
